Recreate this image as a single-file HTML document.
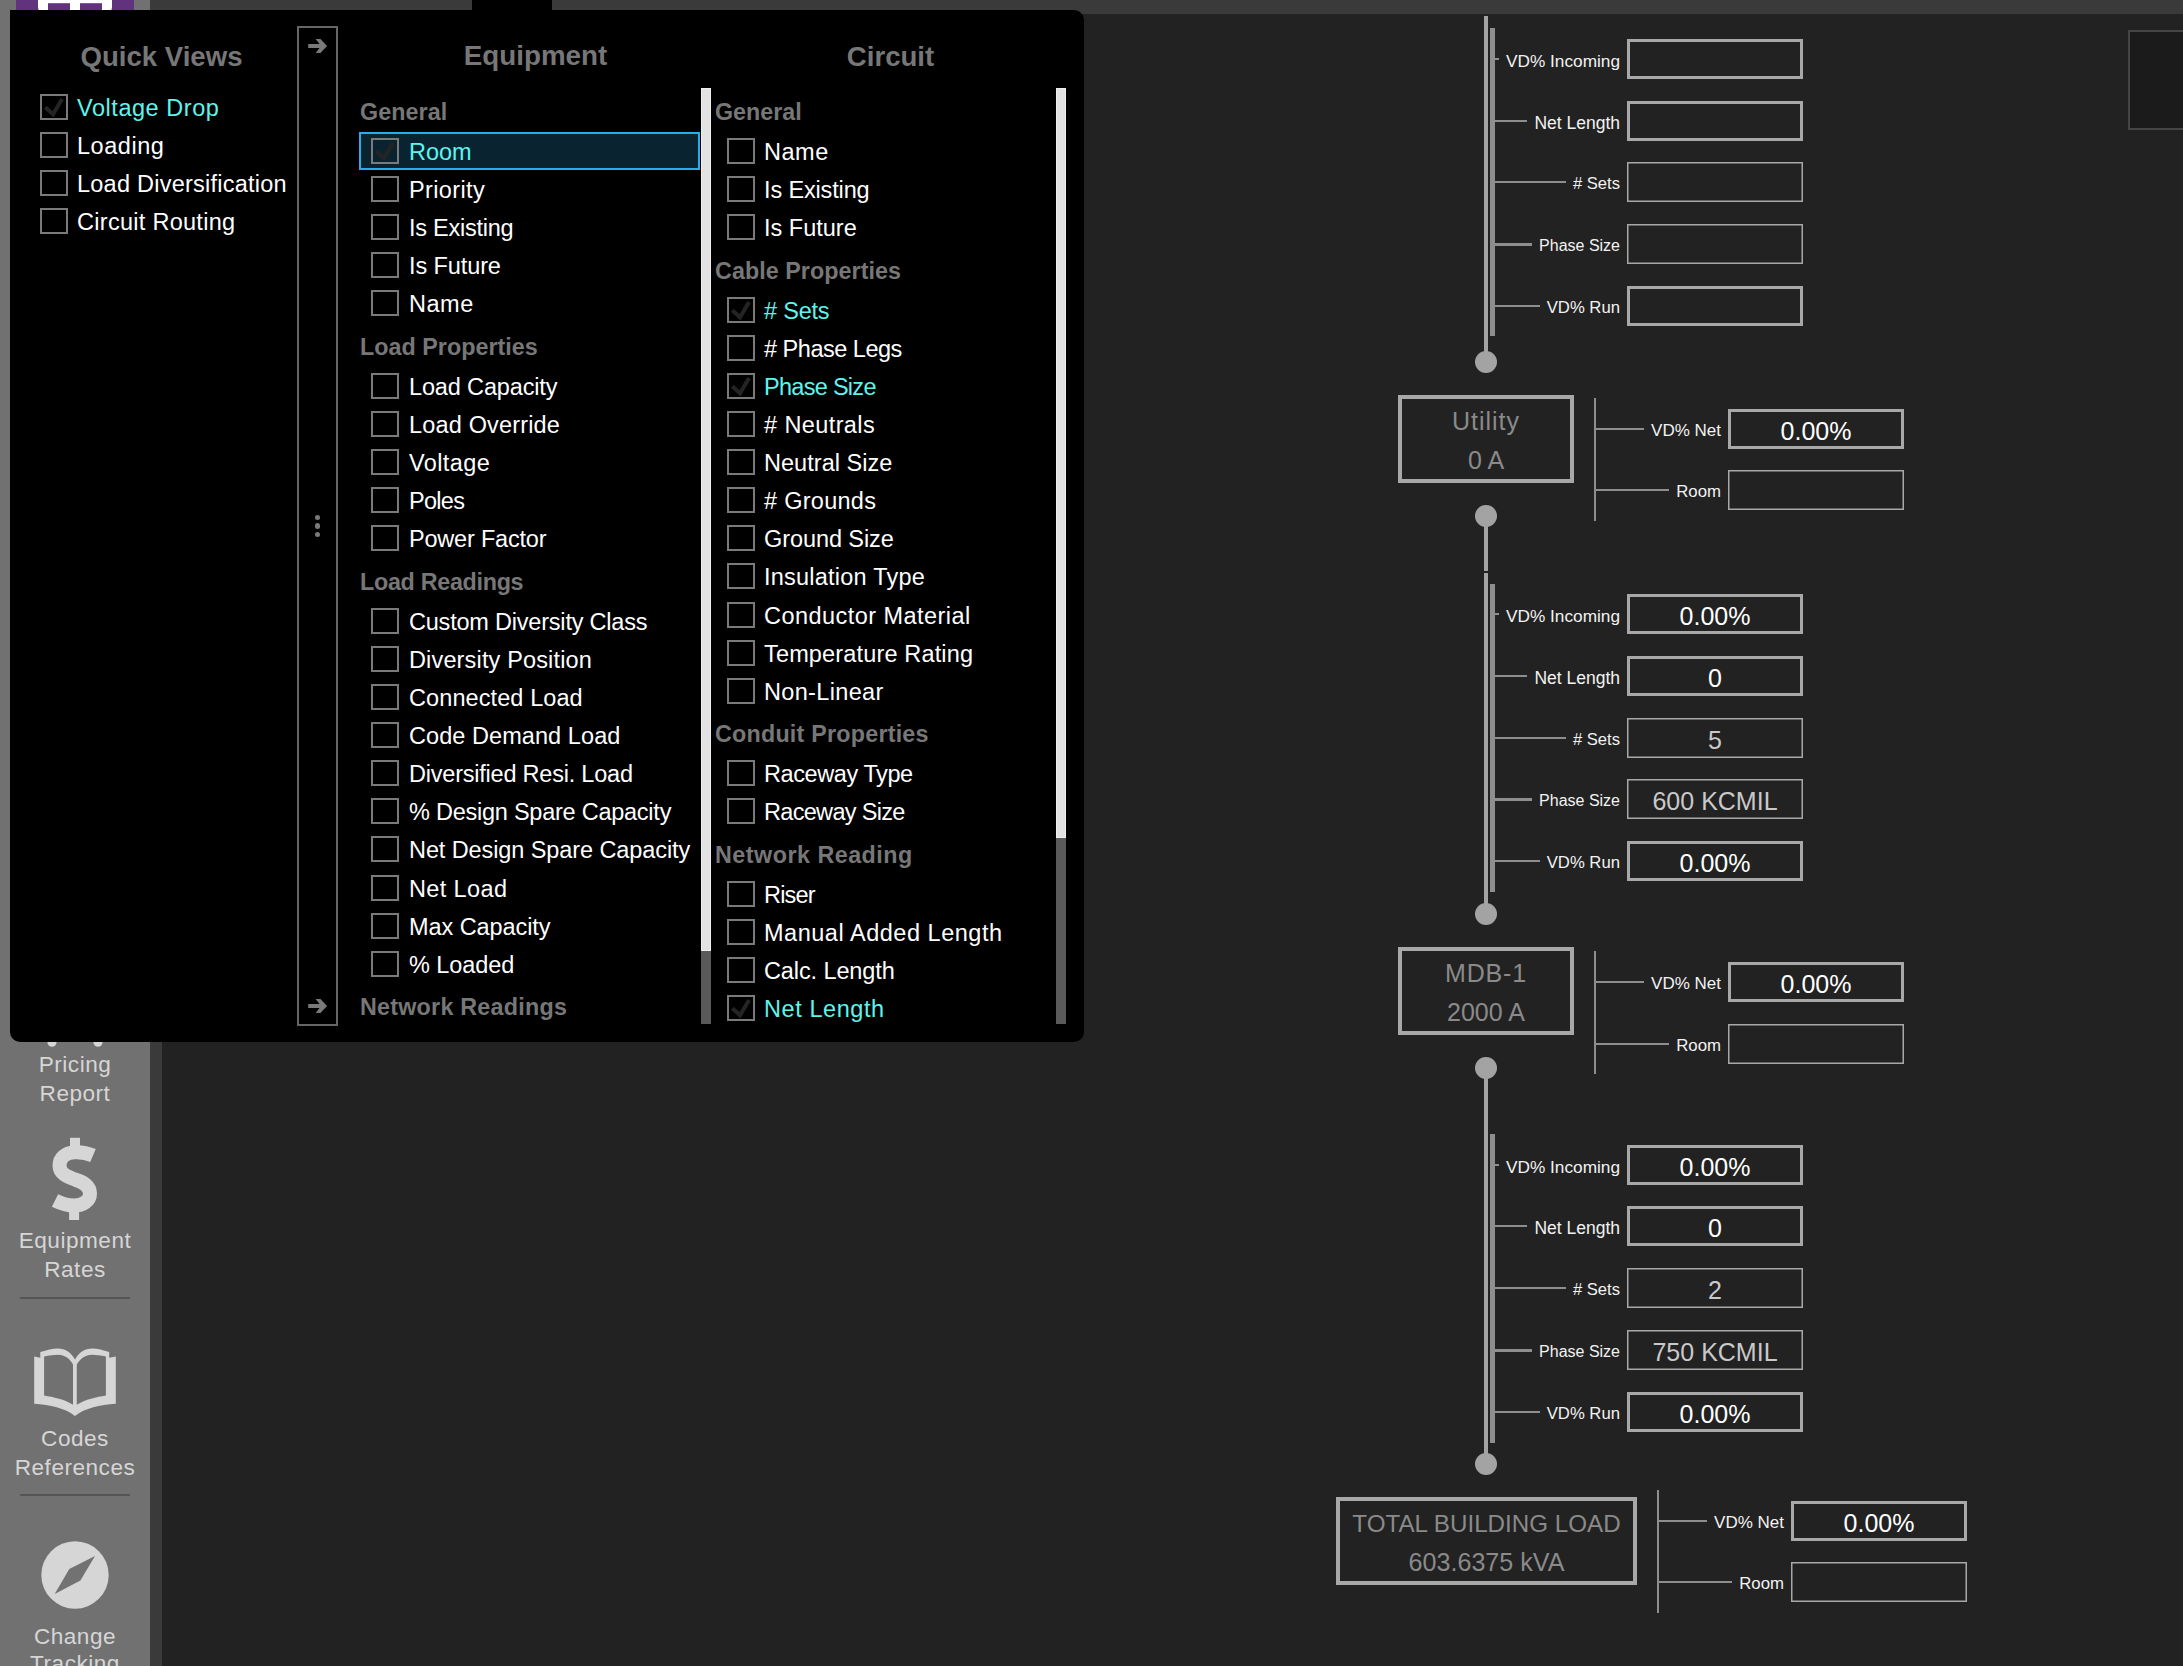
<!DOCTYPE html>
<html><head><meta charset="utf-8"><style>
html,body{margin:0;padding:0;}
body{width:2183px;height:1666px;overflow:hidden;position:relative;background:#222222;font-family:"Liberation Sans",sans-serif;}
.t{position:absolute;white-space:nowrap;line-height:1;}
</style></head><body>
<div style="position:absolute;left:0px;top:0px;width:150px;height:1666px;background:#717171"></div>
<div style="position:absolute;left:150px;top:0px;width:12px;height:1666px;background:#3a3a3a"></div>
<div style="position:absolute;left:150px;top:0px;width:2033px;height:14px;background:#3a3a3a"></div>
<div style="position:absolute;left:472px;top:0px;width:80px;height:14px;background:#000"></div>
<div style="position:absolute;left:16px;top:0px;width:118px;height:14px;background:#61337f"></div>
<svg style="position:absolute;left:16px;top:0" width="118" height="14" viewBox="0 0 118 14"><rect x="22" y="-8" width="74" height="24" rx="9" fill="#fff"/><rect x="32" y="3.2" width="22" height="11" fill="#61337f"/><rect x="64" y="3.2" width="22" height="11" fill="#61337f"/></svg>
<div style="position:absolute;left:2128px;top:30px;width:60px;height:100px;box-sizing:border-box;border:2px solid #454545;background:#1b1b1b"></div>
<svg style="position:absolute;left:0;top:1030px" width="150" height="30"><circle cx="52" cy="12.3" r="4.5" fill="#d6d6d6"/><circle cx="98" cy="12.3" r="4.5" fill="#d6d6d6"/></svg>
<div class="t" style="left:-925.00px;width:2000px;text-align:center;top:1053.87px;font-size:22.6px;color:#d6d6d6;letter-spacing:0.5px;">Pricing</div>
<div class="t" style="left:-925.00px;width:2000px;text-align:center;top:1082.87px;font-size:22.6px;color:#d6d6d6;letter-spacing:0.5px;">Report</div>
<svg style="position:absolute;left:40px;top:1130px" width="70" height="100" viewBox="0 0 70 100"><rect x="30" y="7.8" width="10" height="12" fill="#d6d6d6"/><rect x="29.1" y="77" width="10" height="13" fill="#d6d6d6"/><path d="M53 25.5 C 46 22.5, 40 22, 34.5 22.3 C 25 23, 19.5 28.5, 19.5 35.5 C 19.5 43.5, 27 46.5, 35 49.5 C 44 52.5, 50 56, 50 63.5 C 50 71, 43 75.5, 34 75.5 C 27 75.5, 21 73.5, 15 70.5" fill="none" stroke="#d6d6d6" stroke-width="14"/></svg>
<div class="t" style="left:-925.00px;width:2000px;text-align:center;top:1230.37px;font-size:22.6px;color:#d6d6d6;letter-spacing:0.5px;">Equipment</div>
<div class="t" style="left:-925.00px;width:2000px;text-align:center;top:1258.87px;font-size:22.6px;color:#d6d6d6;letter-spacing:0.5px;">Rates</div>
<div style="position:absolute;left:20px;top:1297px;width:110px;height:2px;background:#555"></div>
<svg style="position:absolute;left:25px;top:1340px" width="100" height="85" viewBox="0 0 100 85"><path fill-rule="evenodd" fill="#d6d6d6" d="M9.2 16.5 L15.3 17.7 L15.3 12 C22 10,28 8.3,33 8.4 C40 8.6,46 12,50 19.5 C54 12,60 8.6,67 8.4 C72 8.3,78 10,84.2 12 L84.2 17.7 L90.8 16.5 L90.8 63.8 C75 65,60 68,50 76 C40 68,25 65,9.2 63.8 Z M19.1 16.5 C24 15.5,29 14.8,33 14.8 C40 15,45 19,48 24.5 L48 64.8 C40 59,28 57,19.1 55.4 Z M51.8 24.5 C55 19,60 15,67 14.8 C71 14.8,76 15.5,80.9 16.5 L80.9 55.4 C72 57,60 59,51.8 64.8 Z"/></svg>
<div class="t" style="left:-925.00px;width:2000px;text-align:center;top:1428.47px;font-size:22.6px;color:#d6d6d6;letter-spacing:0.5px;">Codes</div>
<div class="t" style="left:-925.00px;width:2000px;text-align:center;top:1457.47px;font-size:22.6px;color:#d6d6d6;letter-spacing:0.5px;">References</div>
<div style="position:absolute;left:20px;top:1494px;width:110px;height:2px;background:#555"></div>
<svg style="position:absolute;left:35px;top:1535px" width="80" height="80" viewBox="0 0 80 80"><circle cx="40" cy="40" r="33.7" fill="#d6d6d6"/><path d="M60 20.9 L45.4 45.6 L19.7 59.1 L34.3 34.1 Z" fill="#727272"/></svg>
<div class="t" style="left:-925.00px;width:2000px;text-align:center;top:1625.87px;font-size:22.6px;color:#d6d6d6;letter-spacing:0.5px;">Change</div>
<div class="t" style="left:-925.00px;width:2000px;text-align:center;top:1652.87px;font-size:22.6px;color:#d6d6d6;letter-spacing:0.5px;">Tracking</div>
<div style="position:absolute;left:1484px;top:16px;width:4px;height:346px;background:#a3a3a3"></div>
<div style="position:absolute;left:1490px;top:28px;width:5px;height:308px;background:#8e8e8e"></div>
<div style="position:absolute;left:1495px;top:39px;width:125px;height:40px;display:flex;align-items:center"><div style="flex:1;height:2px;background:#8e8e8e"></div><div style="margin-left:7px;font-size:17.24px;color:#f2f2f2;line-height:40px;white-space:nowrap;position:relative;top:2px">VD% Incoming</div></div>
<div style="position:absolute;left:1627px;top:39px;width:176px;height:40px;box-sizing:border-box;border:3px solid #a8a8a8"></div>
<div style="position:absolute;left:1495px;top:101px;width:125px;height:40px;display:flex;align-items:center"><div style="flex:1;height:2px;background:#8e8e8e"></div><div style="margin-left:7px;font-size:17.5px;color:#f2f2f2;line-height:40px;white-space:nowrap;position:relative;top:2px">Net Length</div></div>
<div style="position:absolute;left:1627px;top:101px;width:176px;height:40px;box-sizing:border-box;border:3px solid #a8a8a8"></div>
<div style="position:absolute;left:1495px;top:162px;width:125px;height:40px;display:flex;align-items:center"><div style="flex:1;height:2px;background:#8e8e8e"></div><div style="margin-left:7px;font-size:16.6px;color:#f2f2f2;line-height:40px;white-space:nowrap;position:relative;top:2px"># Sets</div></div>
<div style="position:absolute;left:1627px;top:162px;width:176px;height:40px;box-shadow:inset 0 0 0 1.5px #a8a8a8"></div>
<div style="position:absolute;left:1495px;top:224px;width:125px;height:40px;display:flex;align-items:center"><div style="flex:1;height:3px;background:#8e8e8e"></div><div style="margin-left:7px;font-size:16.0px;color:#f2f2f2;line-height:40px;white-space:nowrap;position:relative;top:2px">Phase Size</div></div>
<div style="position:absolute;left:1627px;top:224px;width:176px;height:40px;box-shadow:inset 0 0 0 1.5px #a8a8a8"></div>
<div style="position:absolute;left:1495px;top:286px;width:125px;height:40px;display:flex;align-items:center"><div style="flex:1;height:2px;background:#8e8e8e"></div><div style="margin-left:7px;font-size:16.7px;color:#f2f2f2;line-height:40px;white-space:nowrap;position:relative;top:2px">VD% Run</div></div>
<div style="position:absolute;left:1627px;top:286px;width:176px;height:40px;box-sizing:border-box;border:3px solid #a8a8a8"></div>
<div style="position:absolute;left:1475px;top:351px;width:22px;height:22px;border-radius:50%;background:#a3a3a3"></div>
<div style="position:absolute;left:1398px;top:395px;width:176px;height:88px;box-sizing:border-box;border:4px solid #a8a8a8"></div>
<div class="t" style="left:486.00px;width:2000px;text-align:center;top:409.34px;font-size:25px;color:#8a8a8a;letter-spacing:1px;">Utility</div>
<div class="t" style="left:486.00px;width:2000px;text-align:center;top:447.84px;font-size:25px;color:#8a8a8a;">0 A</div>
<div style="position:absolute;left:1594px;top:398px;width:2px;height:123px;background:#8e8e8e"></div>
<div style="position:absolute;left:1596px;top:409px;width:125px;height:40px;display:flex;align-items:center"><div style="flex:1;height:2px;background:#8e8e8e"></div><div style="margin-left:7px;font-size:17.0px;color:#f2f2f2;line-height:40px;white-space:nowrap;position:relative;top:2px">VD% Net</div></div>
<div style="position:absolute;left:1728px;top:409px;width:176px;height:40px;box-sizing:border-box;border:3px solid #a8a8a8"></div>
<div class="t" style="left:816.00px;width:2000px;text-align:center;top:419.34px;font-size:25px;color:#ffffff;">0.00%</div>
<div style="position:absolute;left:1596px;top:470px;width:125px;height:40px;display:flex;align-items:center"><div style="flex:1;height:2px;background:#8e8e8e"></div><div style="margin-left:7px;font-size:16.8px;color:#f2f2f2;line-height:40px;white-space:nowrap;position:relative;top:2px">Room</div></div>
<div style="position:absolute;left:1728px;top:470px;width:176px;height:40px;box-shadow:inset 0 0 0 1.5px #a8a8a8"></div>
<div style="position:absolute;left:1475px;top:505px;width:22px;height:22px;border-radius:50%;background:#a3a3a3"></div>
<div style="position:absolute;left:1484px;top:516px;width:4px;height:55px;background:#a3a3a3"></div>
<div style="position:absolute;left:1484px;top:573px;width:4px;height:340px;background:#a3a3a3"></div>
<div style="position:absolute;left:1490px;top:584px;width:5px;height:308px;background:#8e8e8e"></div>
<div style="position:absolute;left:1495px;top:594px;width:125px;height:40px;display:flex;align-items:center"><div style="flex:1;height:2px;background:#8e8e8e"></div><div style="margin-left:7px;font-size:17.24px;color:#f2f2f2;line-height:40px;white-space:nowrap;position:relative;top:2px">VD% Incoming</div></div>
<div style="position:absolute;left:1627px;top:594px;width:176px;height:40px;box-sizing:border-box;border:3px solid #a8a8a8"></div>
<div class="t" style="left:715.00px;width:2000px;text-align:center;top:604.34px;font-size:25px;color:#ffffff;">0.00%</div>
<div style="position:absolute;left:1495px;top:656px;width:125px;height:40px;display:flex;align-items:center"><div style="flex:1;height:2px;background:#8e8e8e"></div><div style="margin-left:7px;font-size:17.5px;color:#f2f2f2;line-height:40px;white-space:nowrap;position:relative;top:2px">Net Length</div></div>
<div style="position:absolute;left:1627px;top:656px;width:176px;height:40px;box-sizing:border-box;border:3px solid #a8a8a8"></div>
<div class="t" style="left:715.00px;width:2000px;text-align:center;top:666.34px;font-size:25px;color:#ffffff;">0</div>
<div style="position:absolute;left:1495px;top:718px;width:125px;height:40px;display:flex;align-items:center"><div style="flex:1;height:2px;background:#8e8e8e"></div><div style="margin-left:7px;font-size:16.6px;color:#f2f2f2;line-height:40px;white-space:nowrap;position:relative;top:2px"># Sets</div></div>
<div style="position:absolute;left:1627px;top:718px;width:176px;height:40px;box-shadow:inset 0 0 0 1.5px #a8a8a8"></div>
<div class="t" style="left:715.00px;width:2000px;text-align:center;top:728.34px;font-size:25px;color:#c9c9c9;">5</div>
<div style="position:absolute;left:1495px;top:779px;width:125px;height:40px;display:flex;align-items:center"><div style="flex:1;height:3px;background:#8e8e8e"></div><div style="margin-left:7px;font-size:16.0px;color:#f2f2f2;line-height:40px;white-space:nowrap;position:relative;top:2px">Phase Size</div></div>
<div style="position:absolute;left:1627px;top:779px;width:176px;height:40px;box-shadow:inset 0 0 0 1.5px #a8a8a8"></div>
<div class="t" style="left:715.00px;width:2000px;text-align:center;top:789.34px;font-size:25px;color:#c9c9c9;">600 KCMIL</div>
<div style="position:absolute;left:1495px;top:841px;width:125px;height:40px;display:flex;align-items:center"><div style="flex:1;height:2px;background:#8e8e8e"></div><div style="margin-left:7px;font-size:16.7px;color:#f2f2f2;line-height:40px;white-space:nowrap;position:relative;top:2px">VD% Run</div></div>
<div style="position:absolute;left:1627px;top:841px;width:176px;height:40px;box-sizing:border-box;border:3px solid #a8a8a8"></div>
<div class="t" style="left:715.00px;width:2000px;text-align:center;top:851.34px;font-size:25px;color:#ffffff;">0.00%</div>
<div style="position:absolute;left:1475px;top:902.5px;width:22px;height:22px;border-radius:50%;background:#a3a3a3"></div>
<div style="position:absolute;left:1398px;top:947px;width:176px;height:88px;box-sizing:border-box;border:4px solid #a8a8a8"></div>
<div class="t" style="left:486.00px;width:2000px;text-align:center;top:961.34px;font-size:25px;color:#8a8a8a;letter-spacing:0.8px;">MDB-1</div>
<div class="t" style="left:486.00px;width:2000px;text-align:center;top:999.84px;font-size:25px;color:#8a8a8a;">2000 A</div>
<div style="position:absolute;left:1594px;top:951px;width:2px;height:123px;background:#8e8e8e"></div>
<div style="position:absolute;left:1596px;top:962px;width:125px;height:40px;display:flex;align-items:center"><div style="flex:1;height:2px;background:#8e8e8e"></div><div style="margin-left:7px;font-size:17.0px;color:#f2f2f2;line-height:40px;white-space:nowrap;position:relative;top:2px">VD% Net</div></div>
<div style="position:absolute;left:1728px;top:962px;width:176px;height:40px;box-sizing:border-box;border:3px solid #a8a8a8"></div>
<div class="t" style="left:816.00px;width:2000px;text-align:center;top:972.34px;font-size:25px;color:#ffffff;">0.00%</div>
<div style="position:absolute;left:1596px;top:1024px;width:125px;height:40px;display:flex;align-items:center"><div style="flex:1;height:2px;background:#8e8e8e"></div><div style="margin-left:7px;font-size:16.8px;color:#f2f2f2;line-height:40px;white-space:nowrap;position:relative;top:2px">Room</div></div>
<div style="position:absolute;left:1728px;top:1024px;width:176px;height:40px;box-shadow:inset 0 0 0 1.5px #a8a8a8"></div>
<div style="position:absolute;left:1475px;top:1056.5px;width:22px;height:22px;border-radius:50%;background:#a3a3a3"></div>
<div style="position:absolute;left:1484px;top:1067px;width:4px;height:396px;background:#a3a3a3"></div>
<div style="position:absolute;left:1490px;top:1134px;width:5px;height:309px;background:#8e8e8e"></div>
<div style="position:absolute;left:1495px;top:1145px;width:125px;height:40px;display:flex;align-items:center"><div style="flex:1;height:2px;background:#8e8e8e"></div><div style="margin-left:7px;font-size:17.24px;color:#f2f2f2;line-height:40px;white-space:nowrap;position:relative;top:2px">VD% Incoming</div></div>
<div style="position:absolute;left:1627px;top:1145px;width:176px;height:40px;box-sizing:border-box;border:3px solid #a8a8a8"></div>
<div class="t" style="left:715.00px;width:2000px;text-align:center;top:1155.34px;font-size:25px;color:#ffffff;">0.00%</div>
<div style="position:absolute;left:1495px;top:1206px;width:125px;height:40px;display:flex;align-items:center"><div style="flex:1;height:2px;background:#8e8e8e"></div><div style="margin-left:7px;font-size:17.5px;color:#f2f2f2;line-height:40px;white-space:nowrap;position:relative;top:2px">Net Length</div></div>
<div style="position:absolute;left:1627px;top:1206px;width:176px;height:40px;box-sizing:border-box;border:3px solid #a8a8a8"></div>
<div class="t" style="left:715.00px;width:2000px;text-align:center;top:1216.34px;font-size:25px;color:#ffffff;">0</div>
<div style="position:absolute;left:1495px;top:1268px;width:125px;height:40px;display:flex;align-items:center"><div style="flex:1;height:2px;background:#8e8e8e"></div><div style="margin-left:7px;font-size:16.6px;color:#f2f2f2;line-height:40px;white-space:nowrap;position:relative;top:2px"># Sets</div></div>
<div style="position:absolute;left:1627px;top:1268px;width:176px;height:40px;box-shadow:inset 0 0 0 1.5px #a8a8a8"></div>
<div class="t" style="left:715.00px;width:2000px;text-align:center;top:1278.34px;font-size:25px;color:#c9c9c9;">2</div>
<div style="position:absolute;left:1495px;top:1330px;width:125px;height:40px;display:flex;align-items:center"><div style="flex:1;height:3px;background:#8e8e8e"></div><div style="margin-left:7px;font-size:16.0px;color:#f2f2f2;line-height:40px;white-space:nowrap;position:relative;top:2px">Phase Size</div></div>
<div style="position:absolute;left:1627px;top:1330px;width:176px;height:40px;box-shadow:inset 0 0 0 1.5px #a8a8a8"></div>
<div class="t" style="left:715.00px;width:2000px;text-align:center;top:1340.34px;font-size:25px;color:#c9c9c9;">750 KCMIL</div>
<div style="position:absolute;left:1495px;top:1392px;width:125px;height:40px;display:flex;align-items:center"><div style="flex:1;height:2px;background:#8e8e8e"></div><div style="margin-left:7px;font-size:16.7px;color:#f2f2f2;line-height:40px;white-space:nowrap;position:relative;top:2px">VD% Run</div></div>
<div style="position:absolute;left:1627px;top:1392px;width:176px;height:40px;box-sizing:border-box;border:3px solid #a8a8a8"></div>
<div class="t" style="left:715.00px;width:2000px;text-align:center;top:1402.34px;font-size:25px;color:#ffffff;">0.00%</div>
<div style="position:absolute;left:1475px;top:1452.5px;width:22px;height:22px;border-radius:50%;background:#a3a3a3"></div>
<div style="position:absolute;left:1336px;top:1497px;width:301px;height:88px;box-sizing:border-box;border:4px solid #a8a8a8"></div>
<div class="t" style="left:486.50px;width:2000px;text-align:center;top:1512.01px;font-size:24.2px;color:#8a8a8a;">TOTAL BUILDING LOAD</div>
<div class="t" style="left:486.50px;width:2000px;text-align:center;top:1549.75px;font-size:25.1px;color:#8a8a8a;">603.6375 kVA</div>
<div style="position:absolute;left:1657px;top:1490px;width:2px;height:123px;background:#8e8e8e"></div>
<div style="position:absolute;left:1659px;top:1501px;width:125px;height:40px;display:flex;align-items:center"><div style="flex:1;height:2px;background:#8e8e8e"></div><div style="margin-left:7px;font-size:17.0px;color:#f2f2f2;line-height:40px;white-space:nowrap;position:relative;top:2px">VD% Net</div></div>
<div style="position:absolute;left:1791px;top:1501px;width:176px;height:40px;box-sizing:border-box;border:3px solid #a8a8a8"></div>
<div class="t" style="left:879.00px;width:2000px;text-align:center;top:1511.34px;font-size:25px;color:#ffffff;">0.00%</div>
<div style="position:absolute;left:1659px;top:1562px;width:125px;height:40px;display:flex;align-items:center"><div style="flex:1;height:2px;background:#8e8e8e"></div><div style="margin-left:7px;font-size:16.8px;color:#f2f2f2;line-height:40px;white-space:nowrap;position:relative;top:2px">Room</div></div>
<div style="position:absolute;left:1791px;top:1562px;width:176px;height:40px;box-shadow:inset 0 0 0 1.5px #a8a8a8"></div>
<div style="position:absolute;left:10px;top:10px;width:1074px;height:1032px;background:#000;border-radius:0 10px 10px 10px"></div>
<div class="t" style="left:-838.50px;width:2000px;text-align:center;top:42.64px;font-size:27.6px;color:#777777;font-weight:bold;">Quick Views</div>
<div class="t" style="left:-464.50px;width:2000px;text-align:center;top:42.47px;font-size:27.8px;color:#777777;font-weight:bold;">Equipment</div>
<div class="t" style="left:-109.50px;width:2000px;text-align:center;top:42.64px;font-size:27.6px;color:#777777;font-weight:bold;">Circuit</div>
<div style="position:absolute;left:297px;top:26px;width:41px;height:1000px;box-sizing:border-box;border:2px solid #666"></div>
<svg style="position:absolute;left:300px;top:36px" width="36" height="20" viewBox="0 0 36 20"><path d="M8.2 8 H19.5 L15.7 3 H20.5 L27 10 L20.5 17 H15.7 L19.5 12 H8.2 Z" fill="#7a7a7a"/></svg>
<svg style="position:absolute;left:300px;top:996px" width="36" height="20" viewBox="0 0 36 20"><path d="M8.2 8 H19.5 L15.7 3 H20.5 L27 10 L20.5 17 H15.7 L19.5 12 H8.2 Z" fill="#7a7a7a"/></svg>
<div style="position:absolute;left:314.9px;top:514.8px;width:5.2px;height:5.2px;border-radius:50%;background:#7a7a7a"></div>
<div style="position:absolute;left:314.9px;top:523.4px;width:5.2px;height:5.2px;border-radius:50%;background:#7a7a7a"></div>
<div style="position:absolute;left:314.9px;top:532.0px;width:5.2px;height:5.2px;border-radius:50%;background:#7a7a7a"></div>
<div style="position:absolute;left:40px;top:94.0px;width:28px;height:26px;box-sizing:border-box;border:2px solid #7a7a7a"></div>
<svg style="position:absolute;left:40px;top:94.0px" width="28" height="26" viewBox="0 0 28 26"><path d="M5.3 13.2 L13 20.3 L22.1 4.9" fill="none" stroke="#242424" stroke-width="4"/></svg>
<div class="t" style="left:77.00px;top:97.00px;font-size:23.5px;color:#5cf5ee;letter-spacing:0.545px;">Voltage Drop</div>
<div style="position:absolute;left:40px;top:132.1px;width:28px;height:26px;box-sizing:border-box;border:2px solid #7a7a7a"></div>
<div class="t" style="left:77.00px;top:135.10px;font-size:23.5px;color:#ffffff;letter-spacing:0.534px;">Loading</div>
<div style="position:absolute;left:40px;top:170.2px;width:28px;height:26px;box-sizing:border-box;border:2px solid #7a7a7a"></div>
<div class="t" style="left:77.00px;top:173.20px;font-size:23.5px;color:#ffffff;letter-spacing:0.242px;">Load Diversification</div>
<div style="position:absolute;left:40px;top:208.3px;width:28px;height:26px;box-sizing:border-box;border:2px solid #7a7a7a"></div>
<div class="t" style="left:77.00px;top:211.30px;font-size:23.5px;color:#ffffff;letter-spacing:0.286px;">Circuit Routing</div>
<div style="position:absolute;left:359px;top:132px;width:341px;height:38px;box-sizing:border-box;border:2px solid #29acef;background:#0a2331"></div>
<div style="position:absolute;left:340px;top:88px;width:360px;height:936px;overflow:hidden">
<div style="position:absolute;left:-340px;top:-88px;width:1000px;height:1100px">
<div class="t" style="left:360.00px;top:101.28px;font-size:23.3px;color:#777777;font-weight:bold;letter-spacing:0.066px;">General</div>
<div style="position:absolute;left:371px;top:138.0px;width:28px;height:26px;box-sizing:border-box;border:2px solid #7a7a7a"></div>
<svg style="position:absolute;left:371px;top:138.0px" width="28" height="26" viewBox="0 0 28 26"><path d="M5.3 13.2 L13 20.3 L22.1 4.9" fill="none" stroke="#242424" stroke-width="4"/></svg>
<div class="t" style="left:409.00px;top:141.00px;font-size:23.5px;color:#5cf5ee;">Room</div>
<div style="position:absolute;left:371px;top:176.1px;width:28px;height:26px;box-sizing:border-box;border:2px solid #7a7a7a"></div>
<div class="t" style="left:409.00px;top:179.10px;font-size:23.5px;color:#ffffff;letter-spacing:0.371px;">Priority</div>
<div style="position:absolute;left:371px;top:214.2px;width:28px;height:26px;box-sizing:border-box;border:2px solid #7a7a7a"></div>
<div class="t" style="left:409.00px;top:217.20px;font-size:23.5px;color:#ffffff;letter-spacing:-0.240px;">Is Existing</div>
<div style="position:absolute;left:371px;top:252.3px;width:28px;height:26px;box-sizing:border-box;border:2px solid #7a7a7a"></div>
<div class="t" style="left:409.00px;top:255.30px;font-size:23.5px;color:#ffffff;letter-spacing:-0.099px;">Is Future</div>
<div style="position:absolute;left:371px;top:290.40000000000003px;width:28px;height:26px;box-sizing:border-box;border:2px solid #7a7a7a"></div>
<div class="t" style="left:409.00px;top:293.40px;font-size:23.5px;color:#ffffff;letter-spacing:0.533px;">Name</div>
<div class="t" style="left:360.00px;top:336.18px;font-size:23.3px;color:#777777;font-weight:bold;letter-spacing:0.029px;">Load Properties</div>
<div style="position:absolute;left:371px;top:372.90000000000003px;width:28px;height:26px;box-sizing:border-box;border:2px solid #7a7a7a"></div>
<div class="t" style="left:409.00px;top:375.90px;font-size:23.5px;color:#ffffff;letter-spacing:-0.150px;">Load Capacity</div>
<div style="position:absolute;left:371px;top:411.00000000000006px;width:28px;height:26px;box-sizing:border-box;border:2px solid #7a7a7a"></div>
<div class="t" style="left:409.00px;top:414.00px;font-size:23.5px;color:#ffffff;letter-spacing:0.167px;">Load Override</div>
<div style="position:absolute;left:371px;top:449.1000000000001px;width:28px;height:26px;box-sizing:border-box;border:2px solid #7a7a7a"></div>
<div class="t" style="left:409.00px;top:452.10px;font-size:23.5px;color:#ffffff;letter-spacing:0.400px;">Voltage</div>
<div style="position:absolute;left:371px;top:487.2000000000001px;width:28px;height:26px;box-sizing:border-box;border:2px solid #7a7a7a"></div>
<div class="t" style="left:409.00px;top:490.20px;font-size:23.5px;color:#ffffff;letter-spacing:-0.700px;">Poles</div>
<div style="position:absolute;left:371px;top:525.3000000000001px;width:28px;height:26px;box-sizing:border-box;border:2px solid #7a7a7a"></div>
<div class="t" style="left:409.00px;top:528.30px;font-size:23.5px;color:#ffffff;letter-spacing:-0.200px;">Power Factor</div>
<div class="t" style="left:360.00px;top:571.08px;font-size:23.3px;color:#777777;font-weight:bold;letter-spacing:-0.284px;">Load Readings</div>
<div style="position:absolute;left:371px;top:607.8000000000001px;width:28px;height:26px;box-sizing:border-box;border:2px solid #7a7a7a"></div>
<div class="t" style="left:409.00px;top:610.80px;font-size:23.5px;color:#ffffff;letter-spacing:-0.209px;">Custom Diversity Class</div>
<div style="position:absolute;left:371px;top:645.9000000000001px;width:28px;height:26px;box-sizing:border-box;border:2px solid #7a7a7a"></div>
<div class="t" style="left:409.00px;top:648.90px;font-size:23.5px;color:#ffffff;letter-spacing:0.153px;">Diversity Position</div>
<div style="position:absolute;left:371px;top:684.0000000000001px;width:28px;height:26px;box-sizing:border-box;border:2px solid #7a7a7a"></div>
<div class="t" style="left:409.00px;top:687.00px;font-size:23.5px;color:#ffffff;letter-spacing:0.093px;">Connected Load</div>
<div style="position:absolute;left:371px;top:722.1000000000001px;width:28px;height:26px;box-sizing:border-box;border:2px solid #7a7a7a"></div>
<div class="t" style="left:409.00px;top:725.10px;font-size:23.5px;color:#ffffff;letter-spacing:0.066px;">Code Demand Load</div>
<div style="position:absolute;left:371px;top:760.2000000000002px;width:28px;height:26px;box-sizing:border-box;border:2px solid #7a7a7a"></div>
<div class="t" style="left:409.00px;top:763.20px;font-size:23.5px;color:#ffffff;letter-spacing:-0.219px;">Diversified Resi. Load</div>
<div style="position:absolute;left:371px;top:798.3000000000002px;width:28px;height:26px;box-sizing:border-box;border:2px solid #7a7a7a"></div>
<div class="t" style="left:409.00px;top:801.30px;font-size:23.5px;color:#ffffff;letter-spacing:-0.245px;">% Design Spare Capacity</div>
<div style="position:absolute;left:371px;top:836.4000000000002px;width:28px;height:26px;box-sizing:border-box;border:2px solid #7a7a7a"></div>
<div class="t" style="left:409.00px;top:839.40px;font-size:23.5px;color:#ffffff;letter-spacing:-0.092px;">Net Design Spare Capacity</div>
<div style="position:absolute;left:371px;top:874.5000000000002px;width:28px;height:26px;box-sizing:border-box;border:2px solid #7a7a7a"></div>
<div class="t" style="left:409.00px;top:877.50px;font-size:23.5px;color:#ffffff;letter-spacing:0.372px;">Net Load</div>
<div style="position:absolute;left:371px;top:912.6000000000003px;width:28px;height:26px;box-sizing:border-box;border:2px solid #7a7a7a"></div>
<div class="t" style="left:409.00px;top:915.60px;font-size:23.5px;color:#ffffff;letter-spacing:-0.073px;">Max Capacity</div>
<div style="position:absolute;left:371px;top:950.7000000000003px;width:28px;height:26px;box-sizing:border-box;border:2px solid #7a7a7a"></div>
<div class="t" style="left:409.00px;top:953.70px;font-size:23.5px;color:#ffffff;letter-spacing:-0.086px;">% Loaded</div>
<div class="t" style="left:360.00px;top:996.48px;font-size:23.3px;color:#777777;font-weight:bold;letter-spacing:0.240px;">Network Readings</div>
</div></div>
<div style="position:absolute;left:711px;top:88px;width:345px;height:936px;overflow:hidden">
<div style="position:absolute;left:-711px;top:-88px;width:1100px;height:1100px">
<div class="t" style="left:715.00px;top:101.28px;font-size:23.3px;color:#777777;font-weight:bold;">General</div>
<div style="position:absolute;left:727px;top:138.0px;width:28px;height:26px;box-sizing:border-box;border:2px solid #7a7a7a"></div>
<div class="t" style="left:764.00px;top:141.00px;font-size:23.5px;color:#ffffff;letter-spacing:0.533px;">Name</div>
<div style="position:absolute;left:727px;top:176.1px;width:28px;height:26px;box-sizing:border-box;border:2px solid #7a7a7a"></div>
<div class="t" style="left:764.00px;top:179.10px;font-size:23.5px;color:#ffffff;letter-spacing:-0.140px;">Is Existing</div>
<div style="position:absolute;left:727px;top:214.2px;width:28px;height:26px;box-sizing:border-box;border:2px solid #7a7a7a"></div>
<div class="t" style="left:764.00px;top:217.20px;font-size:23.5px;color:#ffffff;letter-spacing:0.001px;">Is Future</div>
<div class="t" style="left:715.00px;top:259.98px;font-size:23.3px;color:#777777;font-weight:bold;letter-spacing:0.053px;">Cable Properties</div>
<div style="position:absolute;left:727px;top:296.7px;width:28px;height:26px;box-sizing:border-box;border:2px solid #7a7a7a"></div>
<svg style="position:absolute;left:727px;top:296.7px" width="28" height="26" viewBox="0 0 28 26"><path d="M5.3 13.2 L13 20.3 L22.1 4.9" fill="none" stroke="#242424" stroke-width="4"/></svg>
<div class="t" style="left:764.00px;top:299.70px;font-size:23.5px;color:#5cf5ee;letter-spacing:-0.200px;"># Sets</div>
<div style="position:absolute;left:727px;top:334.8px;width:28px;height:26px;box-sizing:border-box;border:2px solid #7a7a7a"></div>
<div class="t" style="left:764.00px;top:337.80px;font-size:23.5px;color:#ffffff;letter-spacing:-0.491px;"># Phase Legs</div>
<div style="position:absolute;left:727px;top:372.90000000000003px;width:28px;height:26px;box-sizing:border-box;border:2px solid #7a7a7a"></div>
<svg style="position:absolute;left:727px;top:372.90000000000003px" width="28" height="26" viewBox="0 0 28 26"><path d="M5.3 13.2 L13 20.3 L22.1 4.9" fill="none" stroke="#242424" stroke-width="4"/></svg>
<div class="t" style="left:764.00px;top:375.90px;font-size:23.5px;color:#5cf5ee;letter-spacing:-0.711px;">Phase Size</div>
<div style="position:absolute;left:727px;top:411.00000000000006px;width:28px;height:26px;box-sizing:border-box;border:2px solid #7a7a7a"></div>
<div class="t" style="left:764.00px;top:414.00px;font-size:23.5px;color:#ffffff;letter-spacing:0.400px;"># Neutrals</div>
<div style="position:absolute;left:727px;top:449.1000000000001px;width:28px;height:26px;box-sizing:border-box;border:2px solid #7a7a7a"></div>
<div class="t" style="left:764.00px;top:452.10px;font-size:23.5px;color:#ffffff;letter-spacing:0.036px;">Neutral Size</div>
<div style="position:absolute;left:727px;top:487.2000000000001px;width:28px;height:26px;box-sizing:border-box;border:2px solid #7a7a7a"></div>
<div class="t" style="left:764.00px;top:490.20px;font-size:23.5px;color:#ffffff;letter-spacing:0.276px;"># Grounds</div>
<div style="position:absolute;left:727px;top:525.3000000000001px;width:28px;height:26px;box-sizing:border-box;border:2px solid #7a7a7a"></div>
<div class="t" style="left:764.00px;top:528.30px;font-size:23.5px;color:#ffffff;letter-spacing:-0.080px;">Ground Size</div>
<div style="position:absolute;left:727px;top:563.4000000000001px;width:28px;height:26px;box-sizing:border-box;border:2px solid #7a7a7a"></div>
<div class="t" style="left:764.00px;top:566.40px;font-size:23.5px;color:#ffffff;letter-spacing:0.229px;">Insulation Type</div>
<div style="position:absolute;left:727px;top:601.5000000000001px;width:28px;height:26px;box-sizing:border-box;border:2px solid #7a7a7a"></div>
<div class="t" style="left:764.00px;top:604.50px;font-size:23.5px;color:#ffffff;letter-spacing:0.447px;">Conductor Material</div>
<div style="position:absolute;left:727px;top:639.6000000000001px;width:28px;height:26px;box-sizing:border-box;border:2px solid #7a7a7a"></div>
<div class="t" style="left:764.00px;top:642.60px;font-size:23.5px;color:#ffffff;letter-spacing:0.153px;">Temperature Rating</div>
<div style="position:absolute;left:727px;top:677.7000000000002px;width:28px;height:26px;box-sizing:border-box;border:2px solid #7a7a7a"></div>
<div class="t" style="left:764.00px;top:680.70px;font-size:23.5px;color:#ffffff;letter-spacing:0.333px;">Non-Linear</div>
<div class="t" style="left:715.00px;top:723.48px;font-size:23.3px;color:#777777;font-weight:bold;letter-spacing:0.224px;">Conduit Properties</div>
<div style="position:absolute;left:727px;top:760.2000000000002px;width:28px;height:26px;box-sizing:border-box;border:2px solid #7a7a7a"></div>
<div class="t" style="left:764.00px;top:763.20px;font-size:23.5px;color:#ffffff;letter-spacing:-0.418px;">Raceway Type</div>
<div style="position:absolute;left:727px;top:798.3000000000002px;width:28px;height:26px;box-sizing:border-box;border:2px solid #7a7a7a"></div>
<div class="t" style="left:764.00px;top:801.30px;font-size:23.5px;color:#ffffff;letter-spacing:-0.691px;">Raceway Size</div>
<div class="t" style="left:715.00px;top:844.08px;font-size:23.3px;color:#777777;font-weight:bold;letter-spacing:0.500px;">Network Reading</div>
<div style="position:absolute;left:727px;top:880.8000000000002px;width:28px;height:26px;box-sizing:border-box;border:2px solid #7a7a7a"></div>
<div class="t" style="left:764.00px;top:883.80px;font-size:23.5px;color:#ffffff;letter-spacing:-0.800px;">Riser</div>
<div style="position:absolute;left:727px;top:918.9000000000002px;width:28px;height:26px;box-sizing:border-box;border:2px solid #7a7a7a"></div>
<div class="t" style="left:764.00px;top:921.90px;font-size:23.5px;color:#ffffff;letter-spacing:0.522px;">Manual Added Length</div>
<div style="position:absolute;left:727px;top:957.0000000000002px;width:28px;height:26px;box-sizing:border-box;border:2px solid #7a7a7a"></div>
<div class="t" style="left:764.00px;top:960.00px;font-size:23.5px;color:#ffffff;letter-spacing:-0.109px;">Calc. Length</div>
<div style="position:absolute;left:727px;top:995.1000000000003px;width:28px;height:26px;box-sizing:border-box;border:2px solid #7a7a7a"></div>
<svg style="position:absolute;left:727px;top:995.1000000000003px" width="28" height="26" viewBox="0 0 28 26"><path d="M5.3 13.2 L13 20.3 L22.1 4.9" fill="none" stroke="#242424" stroke-width="4"/></svg>
<div class="t" style="left:764.00px;top:998.10px;font-size:23.5px;color:#5cf5ee;letter-spacing:0.578px;">Net Length</div>
</div></div>
<div style="position:absolute;left:701px;top:88px;width:10px;height:863px;background:#e2e2e2;box-shadow:inset 0 0 0 1px #efefef"></div>
<div style="position:absolute;left:701px;top:951px;width:10px;height:73px;background:#5a5a5a"></div>
<div style="position:absolute;left:1056px;top:88px;width:10px;height:750px;background:#e2e2e2;box-shadow:inset 0 0 0 1px #efefef"></div>
<div style="position:absolute;left:1056px;top:838px;width:10px;height:186px;background:#5a5a5a"></div>
</body></html>
